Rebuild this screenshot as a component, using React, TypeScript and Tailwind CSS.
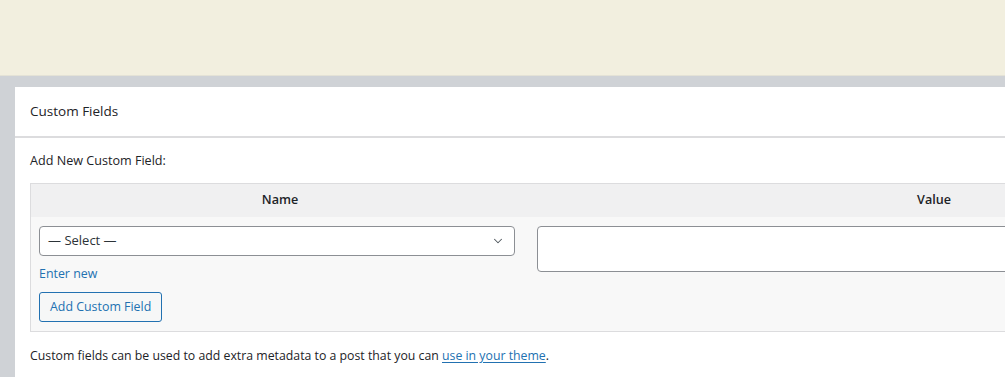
import { ChevronDown } from 'lucide-react';

const FONT = "font-['Open_Sans','Noto_Sans',sans-serif]";

export default function App() {
  return (
    <div className={`w-[1005px] h-[377px] overflow-hidden flex flex-col bg-[#cfd2d6] text-[#1d2327] ${FONT}`}>
      {/* Notice strip */}
      <div className="h-[76px] shrink-0 bg-[#f2efdf] border-b border-[#e4e2d6]" />

      <div className="flex-1 flex pt-[11px] pl-[15px]">
        <div className="w-[1400px] bg-white">
          {/* Header */}
          <div className="h-[51px] flex items-center px-[15px] border-b-2 border-[#dcdcde]">
            <h2 className="text-[13.5px] text-[#1d2327]">Custom Fields</h2>
          </div>

          {/* Body */}
          <div className="px-[15px] pt-[13px]">
            <p className="text-[12.6px] leading-[20px] font-medium text-[#1d2327]">Add New Custom Field:</p>

            <div className="mt-[12px] w-[1310px] border border-[#dcdcde] bg-[#f8f8f8]">
              <div className="flex h-[33px] bg-[#f0f0f1] text-[12.6px] font-semibold text-[#1d2327]">
                <div className="w-[498px] flex items-center justify-center">Name</div>
                <div className="flex-1 flex items-center justify-center">Value</div>
              </div>

              <div className="flex pt-[9px] pb-[9px]">
                <div className="w-[498px] pl-[8px] flex flex-col items-start">
                  <div className="w-[476px] h-[30px] bg-white border border-[#8c8f94] rounded-[4px] flex items-center justify-between pl-[8px] pr-[9px] text-[13px] text-[#2c3338]">
                    <span>— Select —</span>
                    <ChevronDown className="w-[14px] h-[14px] text-[#50575e]" strokeWidth={1.8} />
                  </div>
                  <a className="mt-[9px] text-[12.4px] leading-[18px] text-[#2271b1]">Enter new</a>
                  <button className="mt-[9px] h-[30px] px-[10px] border border-[#2271b1] rounded-[3px] bg-[#f6f7f7] text-[12.4px] text-[#2271b1]">
                    Add Custom Field
                  </button>
                </div>
                <div className="flex-1 pl-[8px] pr-[8px]">
                  <div className="w-full h-[46px] bg-white border border-[#8c8f94] rounded-[4px]" />
                </div>
              </div>
            </div>

            <p className="pt-[14px] text-[12.3px] leading-[20px] text-[#1d2327]">
              Custom fields can be used to add extra metadata to a post that you can{' '}
              <a className="text-[#2271b1] underline underline-offset-2">use in your theme</a>.
            </p>
          </div>
        </div>
      </div>
    </div>
  );
}
